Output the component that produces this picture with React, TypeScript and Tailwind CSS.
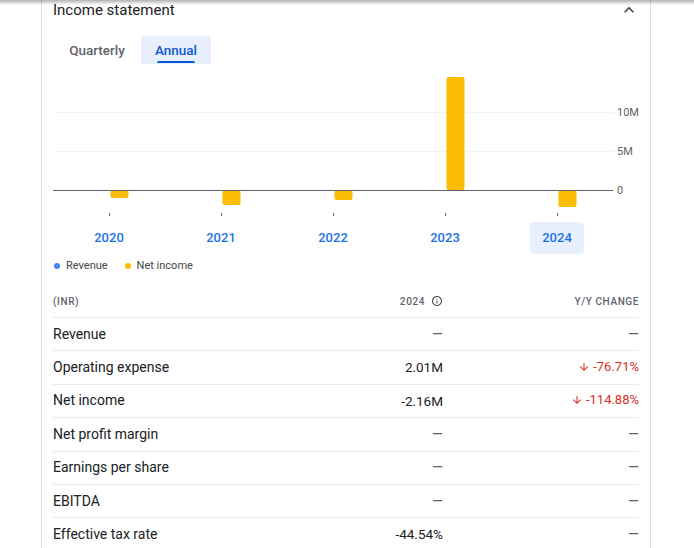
type Row = { label: string; value: string | null; change: string | null }

const ROWS: Row[] = [
  { label: 'Revenue', value: null, change: null },
  { label: 'Operating expense', value: '2.01M', change: '-76.71%' },
  { label: 'Net income', value: '-2.16M', change: '-114.88%' },
  { label: 'Net profit margin', value: null, change: null },
  { label: 'Earnings per share', value: null, change: null },
  { label: 'EBITDA', value: null, change: null },
  { label: 'Effective tax rate', value: '-44.54%', change: null },
]

// net income bars: top/bottom in svg coords (zero line at y=120)
const BARS = [
  { year: '2020', y: 120, h: 8 },
  { year: '2021', y: 120, h: 15 },
  { year: '2022', y: 120, h: 10 },
  { year: '2023', y: 7, h: 113 },
  { year: '2024', y: 120, h: 17 },
]

function Dash() {
  return <span className="text-[14px] text-[#5f6368]">—</span>
}

function Chart() {
  return (
    <svg width={586} height={152} className="block">
      <line x1={0} x2={560} y1={42.5} y2={42.5} stroke="#f1f3f4" strokeWidth={1} />
      <line x1={0} x2={560} y1={81.5} y2={81.5} stroke="#f1f3f4" strokeWidth={1} />
      {BARS.map((b, i) => {
        const cx = 56 + i * 112
        return (
          <g key={b.year}>
            <rect x={cx + 1.5} y={b.y} width={18} height={b.h} rx={2} fill="#fbbc04" />
            <rect x={cx} y={143} width={1} height={3} fill="#5f6368" />
          </g>
        )
      })}
      <line x1={0} x2={560} y1={120.5} y2={120.5} stroke="#5f6368" strokeWidth={1} />
      <g fill="#5f6368" fontSize={11} fontFamily="Roboto, sans-serif" dominantBaseline="middle">
        <text x={564} y={43}>10M</text>
        <text x={564} y={82}>5M</text>
        <text x={564} y={121}>0</text>
      </g>
    </svg>
  )
}

export default function App() {
  return (
    <div className="relative w-[694px] h-[548px] bg-white overflow-hidden font-['Roboto',sans-serif]">
      <div className="absolute top-0 left-0 right-0 h-[5px] bg-gradient-to-b from-black/30 to-transparent" />
      <div className="ml-[41px] w-[610px] h-full border-x border-[#dadce0] pl-[11px] pr-[11px]">
        <div className="flex items-center justify-between h-5">
          <h2 className="text-[15px] leading-5 text-[#202124]">Income statement</h2>
          <svg width={20} height={20} viewBox="0 0 24 24" className="fill-[#444746]">
            <path d="M12 8l-6 6 1.41 1.41L12 10.83l4.59 4.58L18 14z" />
          </svg>
        </div>

        <div className="flex mt-4 h-7">
          <button className="w-[88px] text-[13.5px] font-medium text-[#5f6368]">Quarterly</button>
          <button className="relative w-[70px] text-[13.5px] font-medium text-[#0b57d0] bg-[#e8f0fe]">
            Annual
            <span className="absolute left-[16px] right-[16px] bottom-[1px] h-[2.5px] rounded-t bg-[#0b57d0]" />
          </button>
        </div>

        <div className="mt-[6px]">
          <Chart />
        </div>

        <div className="flex w-[560px] h-8">
          {BARS.map((b) => (
            <div key={b.year} className="flex-1 flex justify-center">
              <span
                className={`flex items-center px-3 rounded text-[13px] font-medium text-[#1a73e8] ${
                  b.year === '2024' ? 'bg-[#e8f0fe]' : ''
                }`}
              >
                {b.year}
              </span>
            </div>
          ))}
        </div>

        <div className="flex items-center gap-[6px] mt-[5px] h-[14px] text-[11px] text-[#444746]">
          <span className="w-[6px] h-[6px] rounded-full bg-[#4285f4] ml-[1px]" />
          <span className="mr-[11px]">Revenue</span>
          <span className="w-[6px] h-[6px] rounded-full bg-[#fbbc04]" />
          <span>Net income</span>
        </div>

        <div className="grid grid-cols-[1fr_110px_196px] items-center h-[32px] mt-[12px] text-[10px] font-medium tracking-[0.6px] text-[#5f6368]">
          <span>(INR)</span>
          <span className="flex items-center justify-end gap-[6px]">
            2024
            <svg width={12} height={12} viewBox="0 0 24 24" className="fill-[#444746]">
              <path d="M11 7h2v2h-2zm0 4h2v6h-2zm1-9C6.48 2 2 6.48 2 12s4.48 10 10 10 10-4.48 10-10S17.52 2 12 2zm0 18c-4.41 0-8-3.59-8-8s3.59-8 8-8 8 3.59 8 8-3.59 8-8 8z" />
            </svg>
          </span>
          <span className="text-right">Y/Y CHANGE</span>
        </div>

        {ROWS.map((r) => (
          <div
            key={r.label}
            className="grid grid-cols-[1fr_110px_196px] items-center h-[33.4px] border-t border-[#e8eaed] text-[#202124]"
          >
            <span className="text-[14px]">{r.label}</span>
            <span className="text-right text-[13.5px]">{r.value ?? <Dash />}</span>
            <span className="text-right text-[13px]">
              {r.change ? (
                <span className="inline-flex items-center gap-[3px] text-[#d93025]">
                  <svg width={12} height={12} viewBox="0 0 24 24" className="fill-[#d93025]">
                    <path d="M20 12l-1.41-1.41L13 16.17V4h-2v12.17l-5.58-5.59L4 12l8 8 8-8z" />
                  </svg>
                  {r.change}
                </span>
              ) : (
                <Dash />
              )}
            </span>
          </div>
        ))}
      </div>
    </div>
  )
}
